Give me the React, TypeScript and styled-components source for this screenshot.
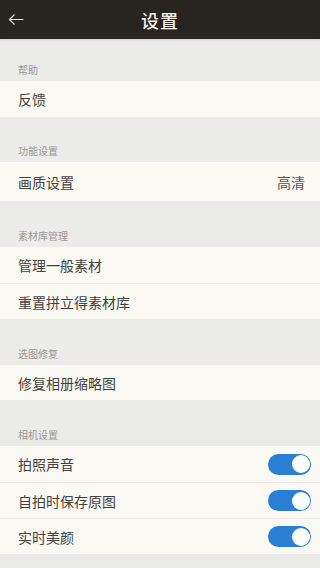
import React, { useState } from 'react';
import styled, { createGlobalStyle } from 'styled-components';

const GlobalStyle = createGlobalStyle`
  html, body {
    margin: 0;
    padding: 0;
    background: #ebebea;
    font-family: "Noto Sans CJK SC", "Noto Sans", sans-serif;
  }
`;

const Page = styled.div`
  width: 320px;
  min-height: 568px;
  background: #ebebea;
`;

const Header = styled.header`
  position: relative;
  height: 39px;
  background: #28241f;
  display: flex;
  align-items: center;
  justify-content: center;
  box-shadow: 0 1px 3px rgba(0, 0, 0, 0.12);
`;

const BackButton = styled.button`
  position: absolute;
  left: 6px;
  top: 9px;
  width: 20px;
  height: 20px;
  padding: 0;
  border: none;
  background: none;
  display: flex;
  align-items: center;
  justify-content: center;
`;

const Title = styled.h1`
  margin: 0;
  color: #f4f1ea;
  font-size: 18px;
  font-weight: 500;
  letter-spacing: 1px;
`;

const SectionLabel = styled.div<{ $height?: number }>`
  height: ${(p) => p.$height ?? 46}px;
  display: flex;
  align-items: flex-end;
  padding: 0 18px 4px;
  box-sizing: border-box;
  font-size: 10px;
  color: #9a9894;
`;

const Group = styled.div`
  background: #fbf9f4;
`;

const Row = styled.div<{ $height?: number }>`
  height: ${(p) => p.$height ?? 36}px;
  display: flex;
  align-items: center;
  justify-content: space-between;
  padding: 0 9px 0 18px;
  box-sizing: border-box;
  font-size: 14px;
  color: #444240;
  & + & {
    border-top: 1px solid #ebe8e1;
  }
`;

const Value = styled.span`
  font-size: 14px;
  color: #55534f;
  margin-right: 6px;
`;

const Track = styled.button<{ $on: boolean }>`
  width: 43px;
  height: 21px;
  padding: 0;
  border: none;
  border-radius: 11px;
  background: ${(p) => (p.$on ? '#2a7ed3' : '#c9c6c0')};
  position: relative;
  cursor: pointer;
`;

const Knob = styled.span<{ $on: boolean }>`
  position: absolute;
  top: 1.5px;
  left: ${(p) => (p.$on ? '23.5px' : '1.5px')};
  width: 18px;
  height: 18px;
  border-radius: 50%;
  background: #ffffff;
`;

const Toggle: React.FC<{ initial?: boolean }> = ({ initial = true }) => {
  const [on, setOn] = useState(initial);
  return (
    <Track $on={on} onClick={() => setOn(!on)}>
      <Knob $on={on} />
    </Track>
  );
};

const App: React.FC = () => {
  return (
    <Page>
      <GlobalStyle />
      <Header>
        <BackButton aria-label="返回">
          <svg width="16" height="13" viewBox="0 0 16 13" fill="none" stroke="#e8e5de" strokeWidth="1.2">
            <path d="M15.5 6.5H1.5M6.5 1.5l-5 5 5 5" />
          </svg>
        </BackButton>
        <Title>设置</Title>
      </Header>

      <SectionLabel $height={42}>帮助</SectionLabel>
      <Group>
        <Row>反馈</Row>
      </Group>

      <SectionLabel $height={45}>功能设置</SectionLabel>
      <Group>
        <Row $height={39}>
          画质设置
          <Value>高清</Value>
        </Row>
      </Group>

      <SectionLabel>素材库管理</SectionLabel>
      <Group>
        <Row>管理一般素材</Row>
        <Row>重置拼立得素材库</Row>
      </Group>

      <SectionLabel>选图修复</SectionLabel>
      <Group>
        <Row $height={35}>修复相册缩略图</Row>
      </Group>

      <SectionLabel>相机设置</SectionLabel>
      <Group>
        <Row>
          拍照声音
          <Toggle />
        </Row>
        <Row>
          自拍时保存原图
          <Toggle />
        </Row>
        <Row>
          实时美颜
          <Toggle />
        </Row>
      </Group>
    </Page>
  );
};

export default App;
